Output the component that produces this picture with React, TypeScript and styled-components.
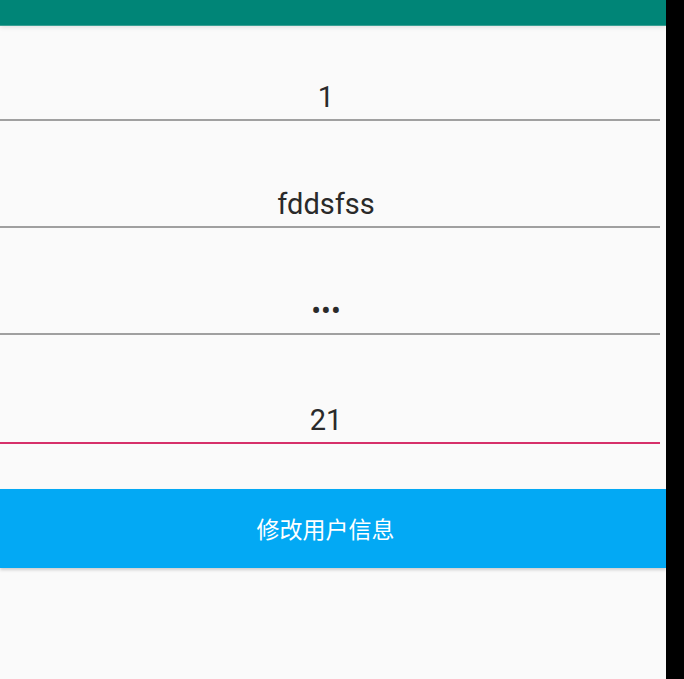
import React from "react";
import styled, { createGlobalStyle } from "styled-components";

const GlobalStyle = createGlobalStyle`
  html, body {
    margin: 0;
    padding: 0;
    background: #000000;
  }
  * { box-sizing: border-box; }
`;

const Screen = styled.div`
  width: 666px;
  height: 679px;
  background: #fafafa;
  display: flex;
  flex-direction: column;
  font-family: Roboto, "Noto Sans CJK SC", sans-serif;
  overflow: hidden;
`;

const TopBar = styled.div`
  height: 25px;
  flex: none;
  background: #008577;
  box-shadow: 0 1px 0 #3a9f93, 0 2px 5px rgba(0, 0, 0, 0.12);
  position: relative;
  z-index: 1;
`;

const Form = styled.div`
  display: flex;
  flex-direction: column;
  padding-top: 52px;
`;

const Field = styled.div<{ $focused?: boolean }>`
  width: 660px;
  height: ${(p) => (p.$focused ? 109 : 107)}px;
  flex: none;
  display: flex;
  align-items: flex-end;
  justify-content: center;
  padding: 0 8px 5px 0;
  border-bottom: 2px solid ${(p) => (p.$focused ? "#d6306a" : "#a0a0a0")};
  &:first-child {
    height: 44px;
  }
`;

const Value = styled.span`
  font-size: 29px;
  line-height: 34px;
  color: #2a2a2a;
`;

const SubmitButton = styled.button`
  margin-top: 45px;
  width: 666px;
  height: 79px;
  border: none;
  background: #03a9f4;
  color: #ffffff;
  font-family: Roboto, "Noto Sans CJK SC", sans-serif;
  font-size: 23px;
  padding: 0 15px 2px 0;
  box-shadow: 0 2px 3px rgba(0, 0, 0, 0.18);
  display: flex;
  align-items: center;
  justify-content: center;
`;

export default function App() {
  return (
    <>
      <GlobalStyle />
      <Screen>
        <TopBar />
        <Form>
          <Field>
            <Value>1</Value>
          </Field>
          <Field>
            <Value>fddsfss</Value>
          </Field>
          <Field>
            <Value>•••</Value>
          </Field>
          <Field $focused>
            <Value>21</Value>
          </Field>
        </Form>
        <SubmitButton>修改用户信息</SubmitButton>
      </Screen>
    </>
  );
}
